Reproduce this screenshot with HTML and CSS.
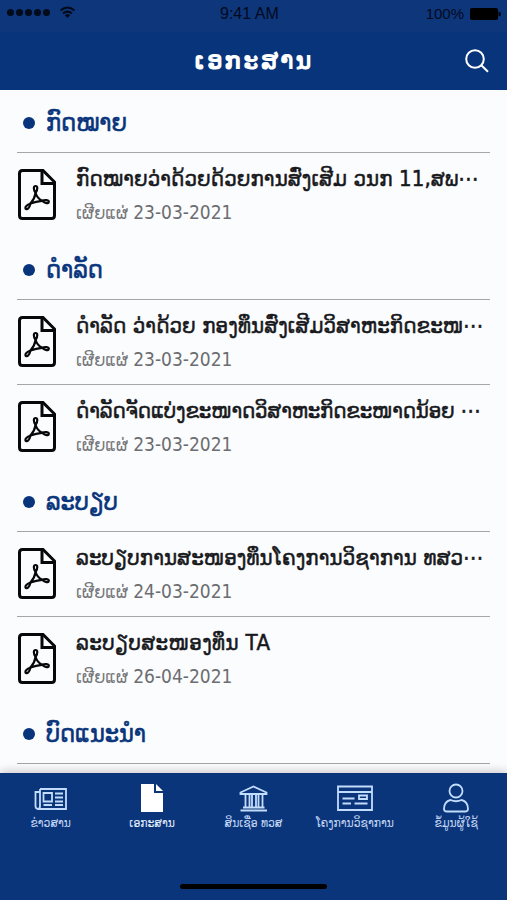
FILE: index.html
```html
<!DOCTYPE html>
<html lang="lo">
<head>
  <meta charset="UTF-8">
  <title>ເອກະສານ</title>
  <link rel="stylesheet" href="styles.css">
</head>
<body>
  <!-- icon used by every document row -->
  <svg class="sprite" width="0" height="0">
    <symbol id="pdf" viewBox="0 0 38 51">
      <path d="M4.500 1.500H25L36.500 13V46.500Q36.500 49.500 33.500 49.500H4.500Q1.500 49.500 1.500 46.500V4.500Q1.500 1.500 4.500 1.500Z" fill="none" stroke="#080808" stroke-width="3"/>
      <path d="M24 2V14.500H36" fill="none" stroke="#080808" stroke-width="3"/>
      <path d="M17.600 24C17 28 15 31.500 12.500 34.500Q18 32.500 24 31.800C21 30 18.600 27.500 17.600 24Z" fill="none" stroke="#080808" stroke-width="2.200" stroke-linejoin="round"/>
      <path d="M17.600 24C15 20 15.500 17 17.600 17S20 20 17.600 24M12.500 34.500C8 36 6.500 39 8 40S11.500 38.500 12.500 34.500M24 31.800C27 30.500 31 31 30.800 33S27 34.500 24 31.800" fill="none" stroke="#080808" stroke-width="2.200" stroke-linejoin="round"/>
    </symbol>
  </svg>

  <header>
    <div class="status">
      <div class="signal">
        <i></i><i></i><i></i><i></i><i></i>
        <svg width="17" height="13" viewBox="0 0 17 13">
          <path d="M1.500 4.500Q8.500 -1.500 15.500 4.500M4 7.500Q8.500 3.700 13 7.500" fill="none" stroke="#020a1c" stroke-width="2"/>
          <path d="M5.800 9.200Q8.500 7 11.200 9.200L8.500 12Z" fill="#020a1c"/>
        </svg>
      </div>
      <span class="clock">9:41 AM</span>
      <div class="battery">
        <span>100%</span>
        <svg width="31" height="12" viewBox="0 0 31 12"><rect width="28" height="12" rx="2"/><path d="M28.500 3.500Q31 4 31 6T28.500 8.500Z"/></svg>
      </div>
    </div>
    <div class="titlebar">
      <h1>ເອກະສານ</h1>
      <svg class="search" width="24" height="24" viewBox="0 0 24 24"><circle cx="10" cy="10" r="8.800"/><path d="M16.300 16.300L23 22.800"/></svg>
    </div>
  </header>

  <main>
    <section>
      <h2><span>ກົດໝາຍ</span></h2>
      <div class="doc">
        <svg class="pdf"><use href="#pdf"/></svg>
        <div class="info">
          <p class="name">ກົດໝາຍວ່າດ້ວຍດ້ວຍການສົ່ງເສີມ ວນກ 11,ສພ⋯</p>
          <p class="date">ເຜີຍແຜ່ <span>23-03-2021</span></p>
        </div>
      </div>
    </section>
    <section>
      <h2><span>ດຳລັດ</span></h2>
      <div class="doc">
        <svg class="pdf"><use href="#pdf"/></svg>
        <div class="info">
          <p class="name">ດຳລັດ ວ່າດ້ວຍ ກອງທຶນສົ່ງເສີມວິສາຫະກິດຂະໜ⋯</p>
          <p class="date">ເຜີຍແຜ່ <span>23-03-2021</span></p>
        </div>
      </div>
      <div class="doc">
        <svg class="pdf"><use href="#pdf"/></svg>
        <div class="info">
          <p class="name tight">ດຳລັດຈັດແບ່ງຂະໜາດວິສາຫະກິດຂະໜາດນ້ອຍ ⋯</p>
          <p class="date">ເຜີຍແຜ່ <span>23-03-2021</span></p>
        </div>
      </div>
    </section>
    <section>
      <h2><span>ລະບຽບ</span></h2>
      <div class="doc">
        <svg class="pdf"><use href="#pdf"/></svg>
        <div class="info">
          <p class="name">ລະບຽບການສະໜອງທຶນໂຄງການວິຊາການ ທສວ⋯</p>
          <p class="date">ເຜີຍແຜ່ <span>24-03-2021</span></p>
        </div>
      </div>
      <div class="doc">
        <svg class="pdf"><use href="#pdf"/></svg>
        <div class="info">
          <p class="name wide">ລະບຽບສະໜອງທຶນ TA</p>
          <p class="date">ເຜີຍແຜ່ <span>26-04-2021</span></p>
        </div>
      </div>
    </section>
    <section>
      <h2><span>ບົດແນະນຳ</span></h2>
      <div class="doc last">
        <svg class="pdf"><use href="#pdf"/></svg>
        <div class="info">
          <p class="name">ຂໍ້ແນະນຳການປະກອບເອກະສານຂັ້ນ</p>
        </div>
      </div>
    </section>
  </main>

  <nav>
    <a class="tab">
      <svg width="34" height="30" viewBox="0 0 34 30">
        <path d="M6 6H32V26H4Q1.500 26 1.500 23V9H6M6 6V23Q6 26 4 26M9.500 10H18V18.500H9.500ZM21 10.500H29M21 14.500H29M21 18.500H29M9.500 22H18M21 22H29"/>
      </svg>
      <span>ຂ່າວສານ</span>
    </a>
    <a class="tab active">
      <svg width="34" height="30" viewBox="0 0 34 30"><path d="M6 1H19V10H28V29H6Z"/><path d="M21 1L28 8H21Z"/></svg>
      <span>ເອກະສານ</span>
    </a>
    <a class="tab">
      <svg width="34" height="30" viewBox="0 0 34 30">
        <path d="M4.500 9.500L17.500 3.500L30.500 9.500V11H4.500ZM9.500 12V23.500M13.500 12V23.500M16 12V23.500M20 12V23.500M22.500 12V23.500M26.500 12V23.500M7 24.500H28.500M4.500 27.500H31"/>
      </svg>
      <span>ສິນເຊື່ອ ທວສ</span>
    </a>
    <a class="tab">
      <svg width="36" height="30" viewBox="0 0 36 30">
        <path d="M1 3.500H35V27H1ZM1 9H35M5.500 15.500H17.500M5.500 20.500H14M17.500 20.500H30.500M22 12.500H30V16H22Z"/>
      </svg>
      <span>ໂຄງການວິຊາການ</span>
    </a>
    <a class="tab">
      <svg width="34" height="30" viewBox="0 0 34 30">
        <circle cx="17" cy="8" r="6.500"/>
        <path d="M11.500 17Q17 19.500 22.500 17Q29 18.500 29 26Q29 28.500 26 28.500H8Q5 28.500 5 26Q5 18.500 11.500 17Z"/>
      </svg>
      <span>ຂໍ້ມູນຜູ້ໃຊ້</span>
    </a>
    <div class="home"></div>
  </nav>
</body>
</html>
```

FILE: styles.css
```css
* {
  box-sizing: border-box;
}
body {
  margin: 0;
  height: 900px;
  display: flex;
  flex-direction: column;
  overflow: hidden;
  background: #fbfcfe;
  font-family: "DejaVu Sans Condensed", "DejaVu Sans", sans-serif;
  font-stretch: condensed;
}
.sprite {
  position: absolute;
}
header {
  height: 90px;
  flex: none;
  background: #08347b;
  color: white;
}
.status {
  height: 32px;
  padding: 0 6px 5px 7px;
  display: grid;
  grid-template-columns: 213px auto 1fr;
  align-items: center;
  background: #0d367b;
  color: #020a1c;
  font-family: "Liberation Sans", sans-serif;
  font-size: 16px;
}
.signal, .battery {
  display: flex;
  align-items: center;
}
.signal {
  gap: 2px;
  margin-top: -3px;
}
.signal i {
  width: 7px;
  height: 7px;
  border-radius: 50%;
  background: #020a1c;
}
.signal svg {
  margin-left: 7px;
}
.battery {
  justify-content: flex-end;
  gap: 6px;
  font-size: 15px;
}
.titlebar {
  height: 58px;
  padding: 0 18px;
  display: grid;
  grid-template-columns: 24px 1fr 24px;
  align-items: center;
}
h1 {
  grid-column: 2;
  margin: 0;
  text-align: center;
  font-size: 24px;
  letter-spacing: 2px;
}
.search {
  fill: none;
  stroke: white;
  stroke-width: 2;
}
main {
  flex: 1;
  min-height: 0;
  overflow: hidden;
  padding: 0 17px;
}
h2 {
  height: 63px;
  margin: 0;
  padding: 4px 0 0 6px;
  display: flex;
  align-items: center;
  gap: 11px;
  border-bottom: 1px solid #a5a6a9;
  color: #08347b;
  font-size: 25px;
  font-weight: normal;
  -webkit-text-stroke: 0.6px;
}
h2::before {
  content: "";
  width: 12px;
  height: 12px;
  border-radius: 50%;
  background: #08347b;
}
h2 span {
  margin-top: -2px;
}
.doc {
  height: 84px;
  padding-top: 16px;
  display: flex;
  gap: 20px;
}
.doc + .doc {
  height: 85px;
  border-top: 1px solid #a5a6a9;
}
.pdf {
  width: 38px;
  height: 51px;
  flex: none;
  margin-left: 1px;
}
.info {
  flex: 1;
  min-width: 0;
}
.last .info {
  margin-top: -4px;
}
.info p {
  margin: 0;
  white-space: nowrap;
}
.name {
  color: #17181b;
  font-size: 22px;
  line-height: 20px;
  letter-spacing: 0.11px;
  -webkit-text-stroke: 0.5px;
}
.name.tight {
  letter-spacing: -0.15px;
}
.name.wide {
  letter-spacing: 0.4px;
}
.date {
  padding-top: 13px;
  color: #77787b;
  font-size: 18px;
  line-height: 20px;
}
.date span {
  font-size: 19px;
  color: #6c6d70;
}
nav {
  height: 127px;
  flex: none;
  display: grid;
  grid-template-columns: repeat(5, 1fr);
  grid-template-rows: 70px 1fr;
  background: #0b357b;
  box-shadow: 0 -2px 8px rgba(70, 50, 50, 0.25);
}
.tab {
  padding-top: 10px;
  display: flex;
  flex-direction: column;
  align-items: center;
  gap: 2px;
  color: #c2d5f5;
  font-size: 12px;
  line-height: 17px;
  white-space: nowrap;
}
.tab svg {
  fill: none;
  stroke: #c2dcfb;
  stroke-width: 1.8;
}
.tab.active {
  color: #e4efff;
}
.tab.active svg {
  fill: white;
  stroke: none;
}
.home {
  grid-column: 1 / -1;
  justify-self: center;
  width: 147px;
  height: 5px;
  margin-top: 41px;
  border-radius: 3px;
  background: #000;
}
```
